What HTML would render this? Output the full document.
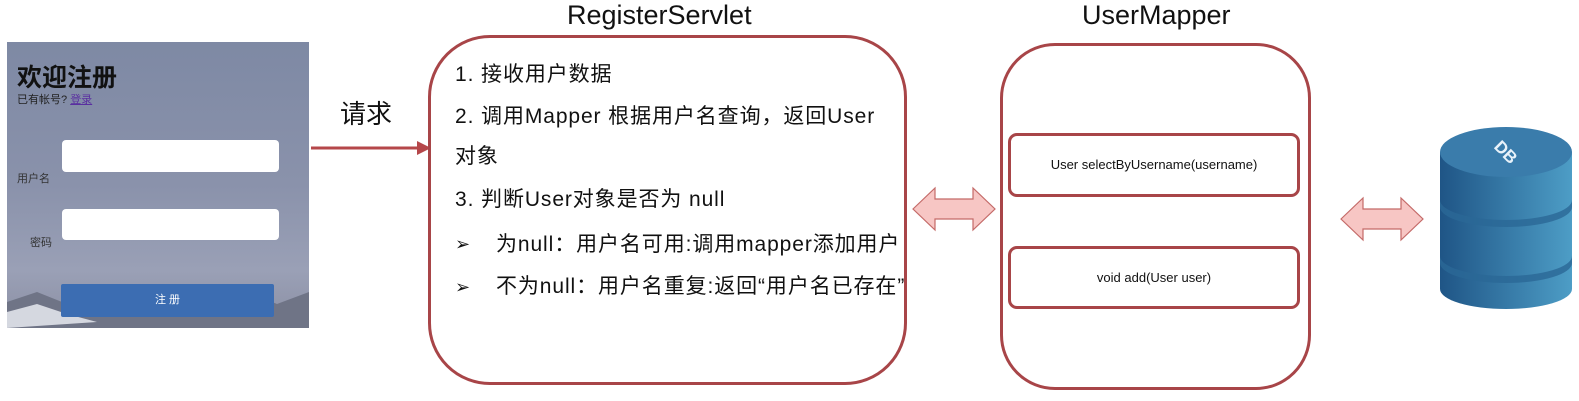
<!DOCTYPE html>
<html><head><meta charset="utf-8"><style>
body{margin:0;width:1579px;height:401px;background:#fff;position:relative;overflow:hidden;font-family:"Liberation Sans","Noto Sans CJK SC",sans-serif;color:#111}
.a{position:absolute;white-space:nowrap;line-height:1}
.t{font-size:21px;letter-spacing:0.9px}
</style></head><body>
<!-- login panel -->
<div style="position:absolute;left:7px;top:42px;width:302px;height:286px;background:linear-gradient(180deg,#7e89a4 0%,#8a92ab 50%,#9aa0b6 80%,#8b8fa3 100%);overflow:hidden">
<svg width="302" height="286" style="position:absolute;left:0;top:0"><path d="M0 260 L30 250 L60 262 L120 275 L170 262 L215 245 L240 250 L270 262 L302 250 L302 286 L0 286Z" fill="#6f7486"/><path d="M0 270 L30 262 L60 272 L90 280 L0 286Z" fill="#d5d8e0"/></svg>
<div class="a" style="left:10px;top:24px;font-size:25px;font-weight:bold;color:#111">欢迎注册</div>
<div class="a" style="left:10px;top:53px;font-size:11px;color:#222">已有帐号? <span style="color:#5a2fa0;text-decoration:underline">登录</span></div>
<div class="a" style="left:10px;top:132px;font-size:11px;color:#333">用户名</div>
<div style="position:absolute;left:55px;top:98px;width:217px;height:32px;background:#fff;border-radius:4px"></div>
<div class="a" style="left:23px;top:196px;font-size:11px;color:#333">密码</div>
<div style="position:absolute;left:55px;top:167px;width:217px;height:31px;background:#fff;border-radius:4px"></div>
<div style="position:absolute;left:54px;top:242px;width:213px;height:33px;background:#3c6db2;border-radius:2px;color:#fff;font-size:11px;text-align:center;line-height:33px">注 册</div>
</div>
<!-- red arrow -->
<svg style="position:absolute;left:305px;top:135px" width="130" height="26"><line x1="6" y1="13" x2="118" y2="13" stroke="#b5474a" stroke-width="3"/><path d="M112 6 L126 13 L112 20 Z" fill="#b5474a"/></svg>
<div class="a" style="left:340px;top:101px;font-size:26px">请求</div>
<!-- servlet box -->
<div class="a" style="left:567px;top:2px;font-size:27px">RegisterServlet</div>
<div style="position:absolute;left:428px;top:35px;width:479px;height:350px;border:3px solid #a84548;border-radius:62px;box-sizing:border-box"></div>
<div class="a t" style="left:455px;top:64px">1. 接收用户数据</div>
<div class="a t" style="left:455px;top:106px">2. 调用Mapper 根据用户名查询，返回User</div>
<div class="a t" style="left:455px;top:146px">对象</div>
<div class="a t" style="left:455px;top:189px">3. 判断User对象是否为 null</div>
<div class="a" style="left:455px;top:235px;font-size:18px">➢</div>
<div class="a t" style="left:496px;top:234px">为null：用户名可用:调用mapper添加用户</div>
<div class="a" style="left:455px;top:278px;font-size:18px">➢</div>
<div class="a t" style="left:496px;top:276px">不为null：用户名重复:返回“用户名已存在”</div>
<!-- double arrows -->
<svg style="position:absolute;left:910px;top:185px" width="90" height="50"><path d="M3 24 L25 3 L25 14 L63 14 L63 3 L85 24 L63 45 L63 34 L25 34 L25 45 Z" fill="#f7c6c4" stroke="#c46a68" stroke-width="1.2"/></svg>
<svg style="position:absolute;left:1338px;top:195px" width="90" height="50"><path d="M3 24 L25 3 L25 14 L63 14 L63 3 L85 24 L63 45 L63 34 L25 34 L25 45 Z" fill="#f7c6c4" stroke="#c46a68" stroke-width="1.2"/></svg>
<!-- mapper box -->
<div class="a" style="left:1082px;top:2px;font-size:27px">UserMapper</div>
<div style="position:absolute;left:1000px;top:43px;width:311px;height:347px;border:3px solid #a84548;border-radius:55px;box-sizing:border-box"></div>
<div style="position:absolute;left:1008px;top:133px;width:292px;height:64px;border:3px solid #a84548;border-radius:9px;box-sizing:border-box;font-size:13px;text-align:center;line-height:58px">User selectByUsername(username)</div>
<div style="position:absolute;left:1008px;top:246px;width:292px;height:63px;border:3px solid #a84548;border-radius:9px;box-sizing:border-box;font-size:13px;text-align:center;line-height:57px">void add(User user)</div>
<!-- DB -->
<svg style="position:absolute;left:1438px;top:124px" width="141" height="190">
<defs><linearGradient id="g" x1="0" x2="1"><stop offset="0" stop-color="#1f5586"/><stop offset="1" stop-color="#4d9dc6"/></linearGradient></defs>
<path d="M2 28 L2 165 A66 20 0 0 0 134 165 L134 28 Z" fill="url(#g)"/>
<path d="M2 76 A66 20 0 0 0 134 76 L134 83 A66 20 0 0 1 2 83Z" fill="#2b6896" opacity=".8"/>
<path d="M2 132 A66 20 0 0 0 134 132 L134 139 A66 20 0 0 1 2 139Z" fill="#2b6896" opacity=".8"/>
<ellipse cx="68" cy="28" rx="66" ry="25" fill="#3a7cab"/>
<text x="68" y="34" transform="rotate(45 68 28)" text-anchor="middle" font-family="Liberation Sans" font-weight="bold" font-size="17" fill="#e8f2fa">DB</text>
</svg>
</body></html>
